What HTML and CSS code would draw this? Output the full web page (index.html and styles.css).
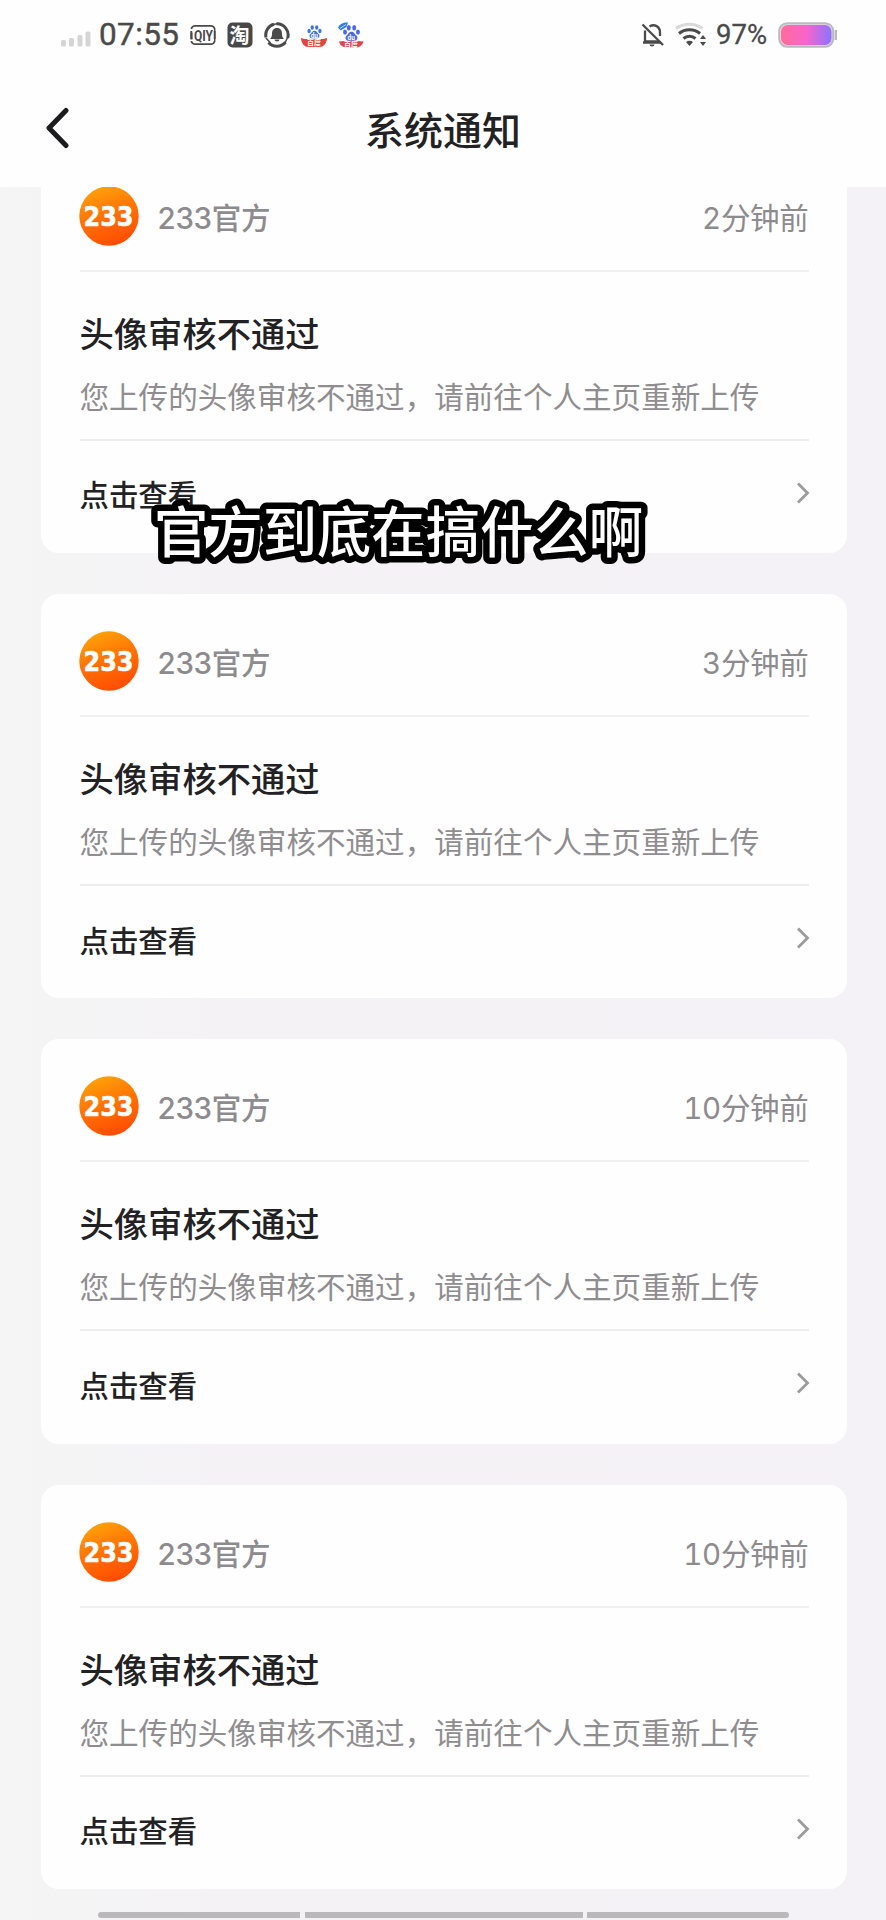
FILE: index.html
```html
<!DOCTYPE html>
<html lang="zh-CN">
<head>
<meta charset="utf-8">
<title>系统通知</title>
<link rel="stylesheet" href="styles.css">
</head>
<body>
<svg class="defs" width="0" height="0" aria-hidden="true">
  <defs>
    <linearGradient id="orange" x1="0.2" y1="0" x2="0.55" y2="1">
      <stop offset="0" stop-color="#ffa60a"/><stop offset="0.5" stop-color="#ff7304"/><stop offset="1" stop-color="#ff4d04"/>
    </linearGradient>
    <linearGradient id="charge" x1="0" y1="0" x2="1" y2="0">
      <stop offset="0" stop-color="#ff6c98"/><stop offset="0.5" stop-color="#f864cc"/><stop offset="1" stop-color="#8a74ff"/>
    </linearGradient>
  </defs>
  <symbol id="logo" viewBox="0 0 60 60">
    <circle cx="30" cy="30" r="29.7" fill="url(#orange)"/>
    <text class="logo-text" x="4.500" y="39.5" textLength="50" lengthAdjust="spacingAndGlyphs">233</text>
  </symbol>
  <symbol id="chevron" viewBox="0 0 14 24">
    <path d="M2 2.5 L11.5 12 L2 21.5" fill="none" stroke="#9c9a9d" stroke-width="2.8"/>
  </symbol>
  <symbol id="paw" viewBox="0 0 20 18">
    <ellipse cx="2.8" cy="8" rx="2.2" ry="2.9"/><ellipse cx="7" cy="3.2" rx="2.2" ry="3"/>
    <ellipse cx="13" cy="3.2" rx="2.2" ry="3"/><ellipse cx="17.2" cy="8" rx="2.2" ry="2.9"/>
    <path d="M10 7.5c3 0 3.5 2.8 5.5 4.4 2.2 1.900 1 5.600-2 5.600H6.500c-3 0-4.200-3.700-2-5.600C6.500 10.300 7 7.500 10 7.500z"/>
  </symbol>
</svg>

<header class="top">
  <div class="status">
    <svg class="signal" viewBox="0 0 30 16" fill="#d5d5d5">
      <rect x="0" y="9" width="5" height="6.500" rx="1.500"/><rect x="8" y="7" width="5" height="8.500" rx="1.500"/>
      <rect x="16.500" y="4" width="5" height="11.500" rx="1.500"/><rect x="24.500" y="0.500" width="5" height="15" rx="1.500"/>
    </svg>
    <span class="clock">07:55</span>
    <div class="apps">
      <svg width="26" height="26" viewBox="0 0 26 26">
        <rect x="1.300" y="3.800" width="23.400" height="18.400" rx="4" fill="none" stroke="#4a4a4a" stroke-width="1.800"/>
        <path d="M0 7h26v2H0zM0 17h26v2H0z" fill="#fefefe"/>
        <path d="M1.500 10.500v7" stroke="#4a4a4a" stroke-width="2"/><path d="M24.700 7v12" stroke="#4a4a4a" stroke-width="1.500"/>
        <text class="qiyi" x="4" y="18.500" textLength="19" lengthAdjust="spacingAndGlyphs">QIY</text>
      </svg>
      <svg width="26" height="26" viewBox="0 0 26 26">
        <rect x="0.500" y="0.500" width="25" height="25" rx="5" fill="#484848"/>
        <text class="tao" x="2.500" y="20.500">淘</text>
      </svg>
      <svg width="26" height="26" viewBox="0 0 26 26">
        <g fill="none" stroke="#4a4a4a" stroke-width="3">
          <path d="M10 2.200A11.200 11.200 0 0 0 2 15.500"/><path d="M12.500 1.800A11.200 11.200 0 0 1 23.700 16"/><path d="M4.500 20.500A11.200 11.200 0 0 0 21.500 20.300"/>
        </g>
        <path d="M9 2.500l5.500-1M2 16l4.500 5M24 14.500l-3 6.500" stroke="#4a4a4a" stroke-width="1.500"/>
        <path d="M13 6c3.500 0 5 2.500 5 5.500 0 3 .6 4 2 5.500H6c1.400-1.500 2-2.500 2-5.500C8 8.500 9.500 6 13 6z" fill="#4a4a4a"/>
        <path d="M10.500 17.500h5a2.500 2 0 0 1-5 0z" fill="#4a4a4a"/>
      </svg>
      <svg width="26" height="26" viewBox="0 0 26 26">
        <use href="#paw" x="6" y="2.500" width="15" height="14.500" fill="#3f76dc"/>
        <text class="du" x="9.700" y="15.500">du</text>
        <path d="M0 16c4 1.500 7 1 13 1s9 .5 13-1c0 4.500-3 9-7 9H7c-4 0-7-4.500-7-9z" fill="#e2463f"/>
        <text class="ribbon" x="6" y="23">百度</text>
      </svg>
      <svg width="26" height="26" viewBox="0 0 26 26">
        <use href="#paw" x="4.500" y="2.500" width="18" height="17" fill="#4a68e6"/>
        <text class="du" x="9.500" y="17.500">du</text>
        <path d="M0 5.500C2 1.500 6 0 10 .5L8.500 5 2.500 8.500z" fill="#2f7be8"/><path d="M2 6.500l6-4" stroke="#bfe0ff" stroke-width="1"/>
        <path d="M1 19.500c5-1 19-1 24.500 0-1 3.500-4 6-7 6h-10c-4 0-6.500-2.500-7.500-6z" fill="#df4450"/>
        <text class="ribbon" x="6" y="24.500">百度</text>
      </svg>
    </div>
    <div class="system">
      <svg width="24" height="26" viewBox="0 0 24 26" fill="none" stroke="#4a4a4a" stroke-width="2.300">
        <path d="M4 8.500V19.500H18M2 20.500H20M8.500 4.500C13.500 1.500 19 4.500 19 10.500V14"/>
        <path d="M1.500 2.500L22 23"/><path d="M8.500 22.500h5a2.500 2 0 0 1-5 0z" fill="#4a4a4a" stroke="none"/>
      </svg>
      <svg class="wifi" width="32" height="26" viewBox="0 0 32 26" fill="none" stroke-width="3">
        <path d="M1 6.500C8.500 .8 20 .8 27.500 6.500" stroke="#d9d9d9"/>
        <path d="M4 11.500C10 6.500 19 6.500 25 11.500M8.500 16.500C12 13.500 17 13.500 20.500 16.500" stroke="#4a4a4a"/>
        <path d="M11 20c2-1.800 5-1.800 7 0l-3.500 4z" fill="#4a4a4a"/><path d="M25 17l3-4 3 4zM25 20l3 4 3-4z" fill="#4a4a4a"/>
      </svg>
      <span class="percent">97%</span>
      <svg width="60" height="26" viewBox="0 0 60 26">
        <rect x="1.200" y="1.200" width="54" height="23.600" rx="8" fill="#e9d8e8" stroke="#bdb9c0" stroke-width="2"/>
        <rect x="3" y="3" width="50.500" height="20" rx="6.500" fill="url(#charge)"/>
        <path d="M57.800 8v10" stroke="#bdb9c0" stroke-width="2.400"/>
      </svg>
    </div>
  </div>
  <div class="navbar">
    <svg class="back" width="26" height="42" viewBox="0 0 26 42"><path d="M22 3.500L5 21L22 38.500" fill="none" stroke="#1c1c1e" stroke-width="5" stroke-linecap="round" stroke-linejoin="round"/></svg>
    <h1 class="title">系统通知</h1>
  </div>
</header>

<main class="viewport">
  <div class="list">
    <article class="card">
      <div class="sender"><svg class="avatar"><use href="#logo"/></svg><span class="name">233官方</span><time class="ago">2分钟前</time></div>
      <div class="message"><h2 class="subject">头像审核不通过</h2><p class="detail">您上传的头像审核不通过，请前往个人主页重新上传</p></div>
      <div class="action"><span>点击查看</span><svg class="chevron"><use href="#chevron"/></svg></div>
    </article>
    <article class="card">
      <div class="sender"><svg class="avatar"><use href="#logo"/></svg><span class="name">233官方</span><time class="ago">3分钟前</time></div>
      <div class="message"><h2 class="subject">头像审核不通过</h2><p class="detail">您上传的头像审核不通过，请前往个人主页重新上传</p></div>
      <div class="action"><span>点击查看</span><svg class="chevron"><use href="#chevron"/></svg></div>
    </article>
    <article class="card">
      <div class="sender"><svg class="avatar"><use href="#logo"/></svg><span class="name">233官方</span><time class="ago">10分钟前</time></div>
      <div class="message"><h2 class="subject">头像审核不通过</h2><p class="detail">您上传的头像审核不通过，请前往个人主页重新上传</p></div>
      <div class="action"><span>点击查看</span><svg class="chevron"><use href="#chevron"/></svg></div>
    </article>
    <article class="card">
      <div class="sender"><svg class="avatar"><use href="#logo"/></svg><span class="name">233官方</span><time class="ago">10分钟前</time></div>
      <div class="message"><h2 class="subject">头像审核不通过</h2><p class="detail">您上传的头像审核不通过，请前往个人主页重新上传</p></div>
      <div class="action"><span>点击查看</span><svg class="chevron"><use href="#chevron"/></svg></div>
    </article>
  </div>
</main>

<footer class="gesture"><i></i><i></i><i></i></footer>

<svg class="caption" width="520" height="90" viewBox="0 0 520 90"><text x="15" y="64" textLength="489">官方到底在搞什么啊</text></svg>
</body>
</html>
```

FILE: styles.css
```css
* { box-sizing: border-box; }
body {
  margin: 0;
  width: 886px;
  height: 1920px;
  display: flex;
  flex-direction: column;
  position: relative;
  overflow: hidden;
  background: linear-gradient(90deg, #f5f5f5 0, #f4f2f5 25%, #f4f2f6 100%);
  color: #222123;
  font-family: Inter, "Noto Sans CJK SC", sans-serif;
}
.defs { position: absolute; }
h1, h2, p { margin: 0; }

.top { flex: none; height: 187px; background: #fefefe; }
.status {
  height: 70px;
  padding: 0 48px 0 61px;
  display: flex;
  align-items: center;
  color: #4a4a4a;
}
.signal { width: 30px; height: 16px; margin-top: 8px; }
.clock {
  margin-left: 8px;
  width: 91px;
  font: 400 31.5px/36px Roboto, sans-serif;
  letter-spacing: .4px;
  -webkit-text-stroke: .4px #4a4a4a;
}
.apps { display: flex; gap: 11px; }
.system { margin-left: auto; display: flex; align-items: center; }
.wifi { margin-left: 10px; }
.percent {
  width: 71px;
  padding-left: 9px;
  white-space: nowrap;
  font: 400 27.500px/32px Roboto, sans-serif;
  -webkit-text-stroke: .3px #4a4a4a;
}
.qiyi { font: 700 14px Roboto, sans-serif; fill: #4a4a4a; }
.tao { font: 700 20px "Noto Sans CJK SC", sans-serif; fill: #fff; }
.du { font: 700 6.500px Roboto, sans-serif; fill: #fff; }
.ribbon { font: 700 7px "Noto Sans CJK SC", sans-serif; fill: #fff; }

.navbar {
  height: 117px;
  padding: 0 43px;
  display: grid;
  grid-template-columns: 26px 1fr 26px;
  align-items: start;
}
.back { margin: 36.500px 0 0 1px; }
.title {
  margin-top: 32px;
  text-align: center;
  font-size: 39px;
  line-height: 58px;
  font-weight: 500;
}

.viewport { flex: 1; min-height: 0; overflow: hidden; }
.list {
  margin-top: -38.300px;
  padding: 0 39px 0 40.500px;
  display: flex;
  flex-direction: column;
  gap: 41px;
}
.card {
  flex: none;
  height: 404.400px;
  padding: 0 38.500px 0 39px;
  border-radius: 18px;
  background: #fefefe;
}
.sender {
  height: 123px;
  padding-top: 13px;
  border-bottom: 2px solid #f0eff1;
  display: flex;
  align-items: center;
  color: #8d8b8e;
  font-size: 29.500px;
}
.avatar { width: 60px; height: 60px; margin-left: -1px; }
.logo-text {
  font: 700 27px "DejaVu Sans", sans-serif;
  fill: #fff;
  stroke: #fff;
  stroke-width: .6px;
}
.name { margin-left: 19px; font-weight: 500; letter-spacing: -.3px; }
.ago { margin-left: auto; letter-spacing: -.3px; font-variant-numeric: tabular-nums; }
.message { height: 169px; padding-top: 38px; border-bottom: 2px solid #edecef; }
.subject { font-size: 34.300px; line-height: 50px; font-weight: 500; }
.detail {
  margin-top: 15px;
  color: #8f8d90;
  font-size: 29.570px;
  line-height: 44px;
  white-space: nowrap;
}
.action {
  height: 105px;
  display: flex;
  align-items: center;
  justify-content: space-between;
  font-size: 29.400px;
  font-weight: 500;
}
.chevron { width: 14px; height: 24px; margin: -1px -1px 0 0; }

.gesture {
  flex: none;
  height: 8px;
  padding: 0 98px;
  display: grid;
  grid-template-columns: 202px 278px 202px;
  gap: 4.500px;
}
.gesture i { height: 6px; background: #bab8bb; }
.gesture i:first-child { border-radius: 3px 0 0 3px; }
.gesture i:last-child { border-radius: 0 3px 3px 0; }

/* Video subtitle laid over the list */
.caption { position: absolute; left: 139px; top: 488px; }
.caption text {
  font: 500 54.300px "Noto Sans CJK SC", sans-serif;
  fill: #fff;
  stroke: #000;
  stroke-width: 13px;
  stroke-linejoin: round;
  paint-order: stroke;
}
```
